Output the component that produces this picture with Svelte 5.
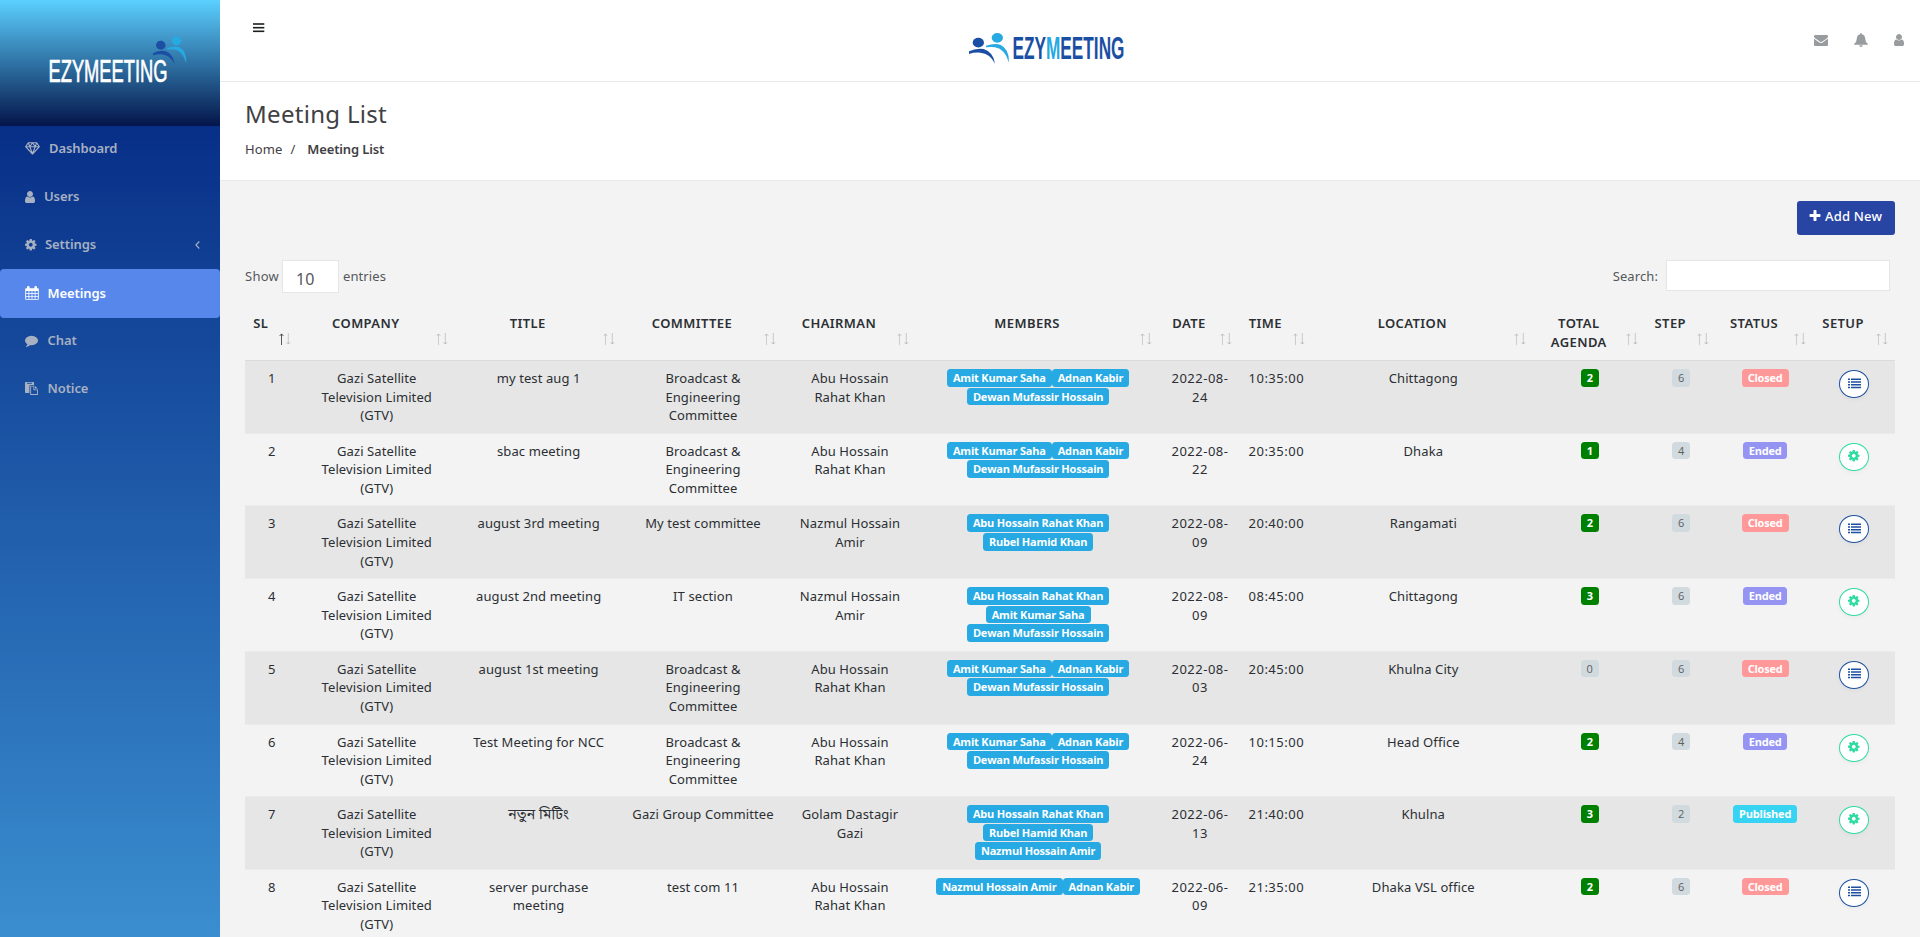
<script>
  const cog = 'M1152 896q0-106-75-181t-181-75-181 75-75 181 75 181 181 75 181-75 75-181zm512-109v222q0 12-8 23t-20 13l-185 28q-19 54-39 91 35 50 107 138 10 12 10 25t-9 23q-27 37-99 108t-94 71q-12 0-26-9l-138-108q-44 23-91 38-16 136-29 186-7 28-36 28h-222q-14 0-24.5-8.5t-11.5-21.5l-28-184q-49-16-90-37l-141 107q-10 9-25 9-14 0-25-11-126-114-165-168-7-10-7-23 0-12 8-23 15-21 51-66.5t54-70.5q-27-50-41-99l-183-27q-13-2-21-12.5t-8-23.5v-222q0-12 8-23t19-13l186-28q14-46 39-92-40-57-107-138-10-12-10-24 0-10 9-23 26-36 98.5-107.5t94.5-71.5q13 0 26 10l138 107q44-23 91-38 16-136 29-186 7-28 36-28h222q14 0 24.5 8.5t11.5 21.5l28 184q49 16 90 37l142-107q9-9 24-9 13 0 25 10 129 119 165 170 7 8 7 22 0 12-8 23-15 21-51 66.5t-54 70.5q26 50 41 98l183 28q13 2 21 12.5t8 23.5z';
  const user = 'M1536 1399q0 109-62.5 187t-150.5 78h-854q-88 0-150.5-78t-62.5-187q0-85 8.5-160.5t31.5-152 58.5-131 94-89 134.5-34.5q131 128 313 128t313-128q76 0 134.5 34.5t94 89 58.5 131 31.5 152 8.5 160.5zm-256-887q0 159-112.5 271.5t-271.5 112.5-271.5-112.5-112.5-271.5 112.5-271.5 271.5-112.5 271.5 112.5 112.5 271.5z';
  const comment = 'M1792 896q0 174-120 321.5t-326 233-450 85.5q-70 0-145-8-198 175-460 242-49 14-114 22-17 2-30.5-9t-17.5-29v-1q-3-4-.5-12t2-10 4.5-9.5l6-9 7-8.5 8-9q7-8 31-34.5t34.5-38 31-39.5 32.5-51 27-59 26-76q-157-89-247.5-220t-90.5-281q0-130 71-248.5t191-204.5 286-136.5 348-50.5q244 0 450 85.5t326 233 120 321.5z';
  const envelope = 'M1792 710v794q0 66-47 113t-113 47h-1472q-66 0-113-47t-47-113v-794q44 49 101 87 362 246 497 345 57 42 92.5 65.5t94.5 48 110 24.5h2q51 0 110-24.5t94.5-48 92.5-65.5q170-123 498-345 57-39 100-87zm0-294q0 79-49 151t-122 123q-376 261-468 325-10 7-42.5 31t-54 38.5-52 32.5-57.5 27-50 9h-2q-23 0-50-9t-57.5-27-52-32.5-54-38.5-42.5-31q-91-64-262-182.5t-205-142.5q-62-42-117-115.5t-55-136.5q0-78 41.5-130t118.5-52h1472q65 0 112.5 47t47.5 113z';
  const plus = 'M1600 736v192q0 40-28 68t-68 28h-416v416q0 40-28 68t-68 28h-192q-40 0-68-28t-28-68v-416h-416q-40 0-68-28t-28-68v-192q0-40 28-68t68-28h416v-416q0-40 28-68t68-28h192q40 0 68 28t28 68v416h416q40 0 68 28t28 68z';

  const nav = [
    { label: 'Dashboard', icon: 'diamond', width: 24 },
    { label: 'Users', icon: 'user', width: 19 },
    { label: 'Settings', icon: 'cog', width: 20, arrow: true },
    { label: 'Meetings', icon: 'calendar', width: 22.5, active: true },
    { label: 'Chat', icon: 'comment', width: 22.5 },
    { label: 'Notice', icon: 'paste', width: 22.5 },
  ];

  const columns = [
    ['SL', 53.5], ['COMPANY', 156.5], ['TITLE', 167.3], ['COMMITTEE', 161.4], ['CHAIRMAN', 132.6],
    ['MEMBERS', 243.7], ['DATE', 80], ['TIME', 72.7], ['LOCATION', 221.3], ['TOTAL AGENDA', 111.6],
    ['STEP', 71.4], ['STATUS', 96.3], ['SETUP', 81.7],
  ];

  const broadcast = ['Broadcast &', 'Engineering', 'Committee'];
  const abu = ['Abu Hossain', 'Rahat Khan'];
  const nazmul = ['Nazmul Hossain', 'Amir'];
  const trio = [['Amit Kumar Saha', 'Adnan Kabir'], ['Dewan Mufassir Hossain']];

  const rows = [
    { title: ['my test aug 1'], committee: broadcast, chair: abu, members: trio, date: '24', month: '08', time: '10:35:00', place: 'Chittagong', agenda: 2, step: 6, status: 'Closed' },
    { title: ['sbac meeting'], committee: broadcast, chair: abu, members: trio, date: '22', month: '08', time: '20:35:00', place: 'Dhaka', agenda: 1, step: 4, status: 'Ended' },
    { title: ['august 3rd meeting'], committee: ['My test committee'], chair: nazmul, members: [['Abu Hossain Rahat Khan'], ['Rubel Hamid Khan']], date: '09', month: '08', time: '20:40:00', place: 'Rangamati', agenda: 2, step: 6, status: 'Closed' },
    { title: ['august 2nd meeting'], committee: ['IT section'], chair: nazmul, members: [['Abu Hossain Rahat Khan'], ['Amit Kumar Saha'], ['Dewan Mufassir Hossain']], date: '09', month: '08', time: '08:45:00', place: 'Chittagong', agenda: 3, step: 6, status: 'Ended' },
    { title: ['august 1st meeting'], committee: broadcast, chair: abu, members: trio, date: '03', month: '08', time: '20:45:00', place: 'Khulna City', agenda: 0, step: 6, status: 'Closed' },
    { title: ['Test Meeting for NCC'], committee: broadcast, chair: abu, members: trio, date: '24', month: '06', time: '10:15:00', place: 'Head Office', agenda: 2, step: 4, status: 'Ended' },
    { title: ['নতুন মিটিং'], bengali: true, committee: ['Gazi Group Committee'], chair: ['Golam Dastagir', 'Gazi'], members: [['Abu Hossain Rahat Khan'], ['Rubel Hamid Khan'], ['Nazmul Hossain Amir']], date: '13', month: '06', time: '21:40:00', place: 'Khulna', agenda: 3, step: 2, status: 'Published' },
    { title: ['server purchase', 'meeting'], committee: ['test com 11'], chair: abu, members: [['Nazmul Hossain Amir', 'Adnan Kabir']], date: '09', month: '06', time: '21:35:00', place: 'Dhaka VSL office', agenda: 2, step: 6, status: 'Closed' },
  ];
</script>

{#snippet glyph(path, size)}
  <svg width={size} height={size} viewBox="0 0 1792 1792" fill="currentColor"><path d={path} /></svg>
{/snippet}

{#snippet people()}
  <ellipse cx="28" cy="29" rx="17" ry="14.500" fill="#1b4fa3" />
  <ellipse cx="85" cy="14.500" rx="17" ry="14.500" fill="#27a9e1" />
  <path fill="#1b4fa3" d="M0 55Q20 45 44 48Q74 58 78 92Q64 62 34 59Q14 58 0 63Z" />
  <path fill="#27a9e1" d="M51 38Q75 30 94 35Q122 48 120 89Q108 48 78 43Q66 41 51 43Z" />
{/snippet}

{#snippet lines(list)}
  {#each list as line, i}{#if i}<br />{/if}{line}{/each}
{/snippet}

<div class="page">
  <aside>
    <div class="brand">
      <svg width="220" height="126" viewBox="0 0 220 126">
        <g transform="translate(153 36.400) scale(.277 .305)">{@render people()}</g>
        <text x="48.500" y="82" font-size="30.500" textLength="119" lengthAdjust="spacingAndGlyphs" fill="#fff" stroke="#fff" stroke-width=".700">EZYMEETING</text>
      </svg>
    </div>
    <nav>
      {#each nav as item}
        <a class:active={item.active} href="#top">
          <span class="ico" style="width:{item.width}px">
            {#if item.icon === 'user'}
              <svg width="10" height="12" viewBox="256 128 1280 1536" fill="currentColor"><path d={user} /></svg>
            {:else if item.icon === 'cog'}
              <svg width="11.500" height="11.500" viewBox="128 128 1536 1536" fill="currentColor"><path d={cog} /></svg>
            {:else if item.icon === 'comment'}
              {@render glyph(comment, 13)}
            {:else if item.icon === 'diamond'}
              <svg width="15" height="13" viewBox="0 0 15 13" fill="none" stroke="currentColor" stroke-width="1.100" stroke-linejoin="round"><path d="M3.300.8h8.400l2.700 3.900-6.900 7.300L.6 4.700zM.6 4.700h13.800M3.300.8l1.500 3.900 2.700 7 2.700-7 1.500-3.900M4.800 4.700 7.500.8l2.700 3.900" /></svg>
            {:else if item.icon === 'calendar'}
              <svg width="14" height="14" viewBox="0 0 14 14"><path fill="currentColor" fill-rule="evenodd" d="M1 2.200h1V1Q2 0 3.300 0T4.600 1v1.200h4.800V1q0-1 1.300-1T12 1v1.200h1q.8 0 .8.8v10q0 .8-.8.8H1q-.8 0-.8-.8V3Q.2 2.200 1 2.200zM1.100 5v1.900H3.500V5zm3.200 0v1.900h2.300V5zm3.100 0v1.900h2.300V5zm3.100 0v1.900h2.400V5zM1.100 7.700v2.200h2.400V7.700zm3.200 0v2.200h2.300V7.700zm3.100 0v2.200h2.300V7.700zm3.100 0v2.200h2.400V7.700zM1.100 10.700v2.200h2.400v-2.200zm3.200 0v2.200h2.300v-2.200zm3.100 0v2.200h2.300v-2.200zm3.100 0v2.200h2.400v-2.200z" /></svg>
            {:else}
              <svg width="13" height="13" viewBox="0 0 13 13"><path fill="currentColor" fill-rule="evenodd" d="M.7 0h7.600Q9 0 9 .7V3H5.600Q4.400 3 4.400 4.200v6.700H.7Q0 10.900 0 10.200V.7Q0 0 .7 0zM2 .8v.9h5V.8zM5.700 3.700h3.600v3q0 .7.7.7h3v5q0 .6-.6.6H5.800q-.6 0-.6-.6V4.300q0-.6.5-.6zm.4.9v7.500h6V8.300H9.400q-1 0-1-1V4.600zM10 3.900 12.800 6.600H10z" /></svg>
            {/if}
          </span>
          <span>{item.label}</span>
          {#if item.arrow}<svg class="chev" width="5" height="8" viewBox="0 0 5 8" fill="none" stroke="currentColor" stroke-width="1.100"><path d="M4.300.5.9 4l3.400 3.500" /></svg>{/if}
        </a>
      {/each}
    </nav>
  </aside>

  <main>
    <header>
      <svg class="bars" width="12" height="10" viewBox="0 0 12 10" fill="#1c1e20"><rect y=".2" width="11.300" height="1.600" /><rect y="3.900" width="11.300" height="1.600" /><rect y="7.500" width="11.300" height="1.600" /></svg>
      <svg class="logo" width="156" height="31" viewBox="0 0 156 31">
        <g transform="scale(.3333)">{@render people()}</g>
        <text x="43.500" y="26" font-size="30.500" font-weight="700" fill="#1b4fa3" textLength="112" lengthAdjust="spacingAndGlyphs">EZY<tspan fill="#27a9e1">M</tspan>EETING</text>
      </svg>
      <div class="tools">
        {@render glyph(envelope, 14)}
        <svg width="14" height="14" viewBox="0 0 14 14" fill="currentColor"><path d="M7 0q.8 0 .8.8v.4q3.200.6 3.400 4.300.1 3.800 2.600 5.200v1H.2v-1q2.500-1.400 2.600-5.200Q3 1.800 6.200 1.200V.8Q6.200 0 7 0zM5.200 12.200h3.600Q8.600 14 7 14t-1.800-1.800z" /></svg>
        <svg width="10" height="12" viewBox="256 128 1280 1536" fill="currentColor"><path d={user} /></svg>
      </div>
    </header>

    <section class="heading">
      <h1>Meeting List</h1>
      <div class="crumbs"><span>Home</span><i>/</i><b>Meeting List</b></div>
    </section>

    <section class="content">
      <div class="actions"><button class="add">{@render glyph(plus, 14)}<span>Add New</span></button></div>
      <div class="filters">
        <div class="length"><span>Show</span><span class="select">10</span><span>entries</span></div>
        <div class="search"><span>Search:</span><input type="text" aria-label="Search" /></div>
      </div>

      <table>
        <colgroup>{#each columns as c}<col style="width:{c[1]}px" />{/each}</colgroup>
        <thead>
          <tr>
            {#each columns as c, i}
              <th>{c[0]}
                <svg class="sort" width="12" height="12" viewBox="0 0 12 12" fill="none" stroke="#333">
                  <path opacity={i ? 0.2 : 0.8} d="M2.500 12V1M.6 3 2.500.9 4.400 3" />
                  <path opacity=".22" d="M9.300 0v11M7.400 9l1.900 2.100L11.200 9" />
                </svg>
              </th>
            {/each}
          </tr>
        </thead>
        <tbody>
          {#each rows as r, i}
            <tr>
              <td>{i + 1}</td>
              <td>Gazi Satellite<br />Television Limited<br />(GTV)</td>
              <td class:bengali={r.bengali}>{@render lines(r.title)}</td>
              <td>{@render lines(r.committee)}</td>
              <td>{@render lines(r.chair)}</td>
              <td>{#each r.members as group}<div>{#each group as m}<span class="badge member">{m}</span>{/each}</div>{/each}</td>
              <td class="num">2022-{r.month}-<br />{r.date}</td>
              <td class="num">{r.time}</td>
              <td>{r.place}</td>
              <td><span class="badge {r.agenda ? 'agenda' : 'plain wide'}">{r.agenda}</span></td>
              <td><span class="badge plain">{r.step}</span></td>
              <td><span class="badge {r.status.toLowerCase()}">{r.status}</span></td>
              <td>
                <button class="setup" class:green={r.status !== 'Closed'} aria-label="Setup">
                  {#if r.status === 'Closed'}
                    <svg width="13" height="11" viewBox="0 0 13 11" fill="currentColor"><path d="M0 .4h2v1.500H0zM3 .4h10v1.500H3zM0 3.200h2v1.500H0zM3 3.200h10v1.500H3zM0 6h2v1.500H0zM3 6h10v1.500H3zM0 8.800h2v1.500H0zM3 8.800h10v1.500H3z" /></svg>
                  {:else}
                    <svg width="11.500" height="11.500" viewBox="128 128 1536 1536" fill="currentColor"><path d={cog} /></svg>
                  {/if}
                </button>
              </td>
            </tr>
          {/each}
        </tbody>
      </table>
    </section>
  </main>
</div>

<style>
  :global(body) { overflow: hidden; background: #f3f3f3; }
  .page {
    display: flex; width: 100%; height: 937px; overflow: hidden;
    font: 13px/18.570px "Noto Sans", "Noto Sans Bengali", sans-serif; letter-spacing: .1px; color: #2b2f33;
  }
  svg { display: block; flex: none; overflow: visible; }
  svg text { font-family: "Liberation Sans Narrow", "Liberation Sans", sans-serif; letter-spacing: 0; }
  aside { width: 220px; flex: none; background: linear-gradient(#00207c, #3a8ed0); }
  .brand { height: 126px; background: linear-gradient(#5bd0ff, #04154a); }
  nav { margin-top: -1.500px; display: flex; flex-direction: column; }
  nav a {
    height: 48px; box-sizing: border-box; padding: 0 20px 0 25px; display: flex; align-items: center;
    color: #a7b1c2; font-weight: 600; text-decoration: none; border-radius: 4px; letter-spacing: -.1px;
  }
  nav a.active { background: #5787ea; color: #fff; height: 49px; margin-bottom: -.900px; }
  .ico { display: flex; }
  .chev { margin-left: auto; }
  main { flex: 1; min-width: 0; }
  header { height: 81px; border-bottom: 1px solid #e7eaec; background: #fff; display: flex; align-items: flex-start; }
  .bars { margin: 23px 0 0 33px; }
  .logo { margin: 33px 0 0 704px; }
  .tools { margin: 33px 16px 0 auto; display: flex; align-items: center; gap: 26px; color: #999c9e; height: 14px; }
  .heading { height: 98px; background: #fff; border-bottom: 1px solid #e7eaec; padding: 0 25px; color: #3f4144; }
  h1 { margin: 0; padding-top: 16px; font-size: 24px; line-height: 32px; font-weight: 400; letter-spacing: .3px; }
  .crumbs { margin-top: 10px; display: flex; }
  .crumbs i { font-style: normal; margin: 0 12px 0 8px; }
  .crumbs b { font-weight: 600; letter-spacing: -.15px; }
  .content { padding: 20px 25px 0; }
  .actions { display: flex; justify-content: flex-end; }
  .add {
    width: 98px; height: 34px; border: 0; border-radius: 3px; background: #2945a4; color: #fff; font: inherit; font-weight: 500;
    display: flex; padding: 6px 11px; gap: 3px; letter-spacing: .2px; white-space: nowrap;
  }
  .add svg { margin-top: 2px; }
  .filters { margin-top: 25px; height: 46px; display: flex; justify-content: space-between; color: #55585b; }
  .length, .search { display: flex; line-height: 32px; }
  .length span:first-child { letter-spacing: .25px; }
  .select { box-sizing: border-box; width: 57px; height: 33px; margin: 0 4px 0 3px; padding: 2px 0 0 13px; background: #fff; border: 1px solid #e5e6e7; font-size: 16px; }
  .search input { box-sizing: border-box; width: 224px; height: 31px; margin: 0 5px 0 8px; border: 1px solid #e5e6e7; background: #fff; }
  table { width: 1650px; table-layout: fixed; border-collapse: separate; border-spacing: 0; text-align: center; }
  th { position: relative; height: 38.100px; padding: 8px 30px 8px 8px; border-bottom: 1px solid #d9dbdd; vertical-align: top; font-weight: 600; letter-spacing: .4px; }
  .sort { position: absolute; right: 7.500px; bottom: 15px; }
  td { height: 55.700px; padding: 8px 8px; border-top: 1px solid #e9ebec; vertical-align: top; white-space: nowrap; }
  tbody tr:first-child td { border-top: 0; }
  tbody tr:nth-child(odd) { background: #e6e6e6; }
  .num { letter-spacing: .5px; }
  .bengali { font-size: 14px; }
  .badge { display: inline-block; box-sizing: border-box; height: 17.500px; padding: 3px 6px; border-radius: 3.500px; font: 700 11px/11.500px "Open Sans", sans-serif; letter-spacing: -.2px; color: #fff; vertical-align: top; }
  .member { background: #27a9e3; }
  .agenda { background: #008000; }
  .plain { background: #d1dade; color: #5e5e5e; font-weight: 400; letter-spacing: 0; }
  .closed { background: #ff9999; }
  .ended { background: #9594f2; }
  .published { background: #37d3f2; }
  .setup { display: flex; width: 30px; height: 28px; margin: 1px auto 0; padding: 0 0 2px; align-items: center; justify-content: center; border: 1px solid #1c4fa1; border-radius: 50%; background: #fff; color: #1c4fa1; box-shadow: 0 2px 4px rgba(0, 0, 0, .04); }
  .setup.green { border-color: #2fdca0; color: #2fdca0; }
</style>
